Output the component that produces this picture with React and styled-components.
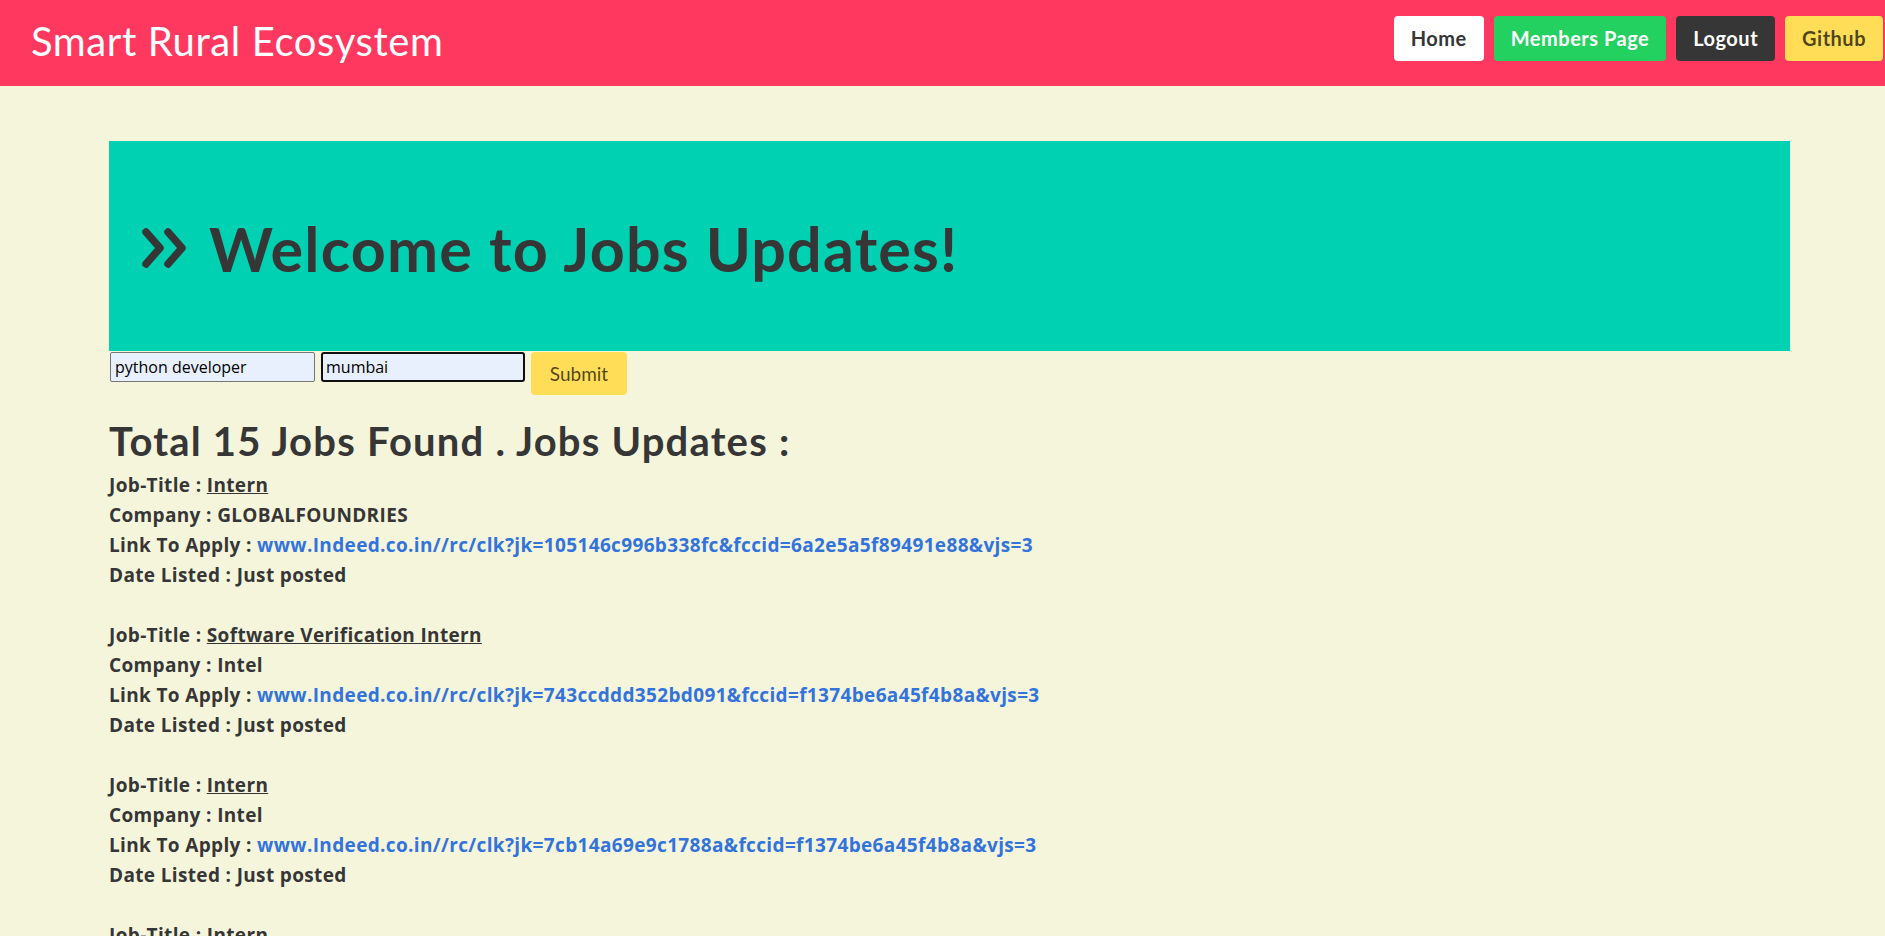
import React from "react";
import styled, { createGlobalStyle } from "styled-components";

const COLOR = {
  PINK: "#ff3860",
  TEAL: "#00d1b2",
  GREEN: "#23d160",
  DARK: "#363636",
  YELLOW: "#ffdd57",
  LINK: "#3273dc",
  BEIGE: "#f5f5dc",
};

const jobs = [
  {
    title: "Intern",
    company: "GLOBALFOUNDRIES",
    link: "www.Indeed.co.in//rc/clk?jk=105146c996b338fc&fccid=6a2e5a5f89491e88&vjs=3",
    date: "Just posted",
  },
  {
    title: "Software Verification Intern",
    company: "Intel",
    link: "www.Indeed.co.in//rc/clk?jk=743ccddd352bd091&fccid=f1374be6a45f4b8a&vjs=3",
    date: "Just posted",
  },
  {
    title: "Intern",
    company: "Intel",
    link: "www.Indeed.co.in//rc/clk?jk=7cb14a69e9c1788a&fccid=f1374be6a45f4b8a&vjs=3",
    date: "Just posted",
  },
  {
    title: "Intern",
    company: "Intel",
    link: "www.Indeed.co.in//rc/clk?jk=2d1f0b7c5e9a4413&fccid=f1374be6a45f4b8a&vjs=3",
    date: "Just posted",
  },
];

const NAV_LINKS = [
  { label: "Home", variant: "white" },
  { label: "Members Page", variant: "green" },
  { label: "Logout", variant: "dark" },
  { label: "Github", variant: "yellow" },
];

const DoubleAngle = () => (
  <svg width="48" height="40" viewBox="0 0 48 40">
    <g fill="none" stroke={COLOR.DARK} strokeWidth="7.5" strokeLinecap="round" strokeLinejoin="round">
      <polyline points="5,4 19,20 5,36" />
      <polyline points="27,4 41,20 27,36" />
    </g>
  </svg>
);

const App = () => {
  return (
    <>
      <GlobalStyle />
      <StyledNavbar>
        <StyledBrand>Smart Rural Ecosystem</StyledBrand>
        <StyledNavButtons>
          {NAV_LINKS.map((item) => (
            <StyledNavButton key={item.label} $variant={item.variant}>
              {item.label}
            </StyledNavButton>
          ))}
        </StyledNavButtons>
      </StyledNavbar>
      <StyledMain>
        <StyledHero>
          <DoubleAngle />
          <StyledHeroTitle>Welcome to Jobs Updates!</StyledHeroTitle>
        </StyledHero>
        <StyledForm onSubmit={(e) => e.preventDefault()}>
          <StyledInput defaultValue="python developer" />
          <StyledInput defaultValue="mumbai" $focused />
          <StyledSubmit type="submit">Submit</StyledSubmit>
        </StyledForm>
        <StyledHeading>Total 15 Jobs Found . Jobs Updates :</StyledHeading>
        {jobs.map((job, i) => (
          <StyledJob key={i}>
            <StyledLine>
              Job-Title : <StyledTitleLink href="#">{job.title}</StyledTitleLink>
            </StyledLine>
            <StyledLine>Company : {job.company}</StyledLine>
            <StyledLine>
              Link To Apply : <StyledApplyLink href="#">{job.link}</StyledApplyLink>
            </StyledLine>
            <StyledLine>Date Listed : {job.date}</StyledLine>
          </StyledJob>
        ))}
      </StyledMain>
    </>
  );
};
export default App;

const GlobalStyle = createGlobalStyle`
  body {
    margin: 0;
    background-color: ${COLOR.BEIGE};
    font-family: Lato, "Open Sans", sans-serif;
    color: ${COLOR.DARK};
  }
`;

const StyledNavbar = styled.nav`
  display: flex;
  align-items: center;
  justify-content: space-between;
  height: 86px;
  padding: 0 2px 0 31px;
  background-color: ${COLOR.PINK};
`;
const StyledBrand = styled.div`
  color: #fff;
  font-size: 40px;
  letter-spacing: 0.6px;
  margin-top: -4px;
`;
const StyledNavButtons = styled.div`
  display: flex;
  gap: 10px;
  margin-top: -10px;
`;
const BUTTON_COLORS = {
  white: { bg: "#fff", fg: COLOR.DARK },
  green: { bg: COLOR.GREEN, fg: "#fff" },
  dark: { bg: COLOR.DARK, fg: "#fff" },
  yellow: { bg: COLOR.YELLOW, fg: "rgba(0, 0, 0, 0.7)" },
};
const StyledNavButton = styled.a`
  display: flex;
  align-items: center;
  justify-content: center;
  height: 45px;
  padding: 0 17px;
  border-radius: 4px;
  font-size: 20px;
  font-weight: 700;
  letter-spacing: 0.5px;
  cursor: pointer;
  background-color: ${({ $variant }) => BUTTON_COLORS[$variant].bg};
  color: ${({ $variant }) => BUTTON_COLORS[$variant].fg};
`;
const StyledMain = styled.main`
  padding: 55px 95px 40px 109px;
`;
const StyledHero = styled.section`
  display: flex;
  align-items: center;
  gap: 20px;
  height: 210px;
  padding-left: 32px;
  padding-top: 4px;
  box-sizing: border-box;
  background-color: ${COLOR.TEAL};
`;
const StyledHeroTitle = styled.h1`
  margin: 0;
  font-size: 61px;
  font-weight: 700;
  letter-spacing: 1.2px;
  color: ${COLOR.DARK};
  line-height: 1;
`;
const StyledForm = styled.form`
  display: flex;
  align-items: flex-start;
  padding-left: 1px;
  margin-top: 1px;
`;
const StyledInput = styled.input`
  box-sizing: border-box;
  width: ${({ $focused }) => ($focused ? "204px" : "205px")};
  height: 30px;
  margin-right: 6px;
  padding: 0 ${({ $focused }) => ($focused ? "3px" : "4px")};
  font-family: "Open Sans", sans-serif;
  font-size: 16px;
  color: #000;
  background-color: #e8f0fe;
  border: ${({ $focused }) => ($focused ? "2px solid #101010" : "1px solid #767676")};
  border-radius: ${({ $focused }) => ($focused ? "3px" : "2px")};
  outline: none;
`;
const StyledSubmit = styled.button`
  height: 43px;
  width: 96px;
  border: none;
  border-radius: 4px;
  font-family: Lato, sans-serif;
  font-size: 19px;
  color: rgba(0, 0, 0, 0.7);
  background-color: ${COLOR.YELLOW};
  cursor: pointer;
`;
const StyledHeading = styled.h2`
  margin: 24px 0 6px;
  font-size: 40px;
  font-weight: 700;
  letter-spacing: 1.2px;
  line-height: 45px;
`;
const StyledJob = styled.div`
  margin-bottom: 30px;
`;
const StyledLine = styled.div`
  font-family: "Open Sans", sans-serif;
  font-size: 19px;
  font-weight: 700;
  letter-spacing: 0.35px;
  line-height: 30px;
`;
const StyledTitleLink = styled.a`
  color: ${COLOR.DARK};
  text-decoration: underline;
`;
const StyledApplyLink = styled.a`
  color: ${COLOR.LINK};
  text-decoration: none;
`;
